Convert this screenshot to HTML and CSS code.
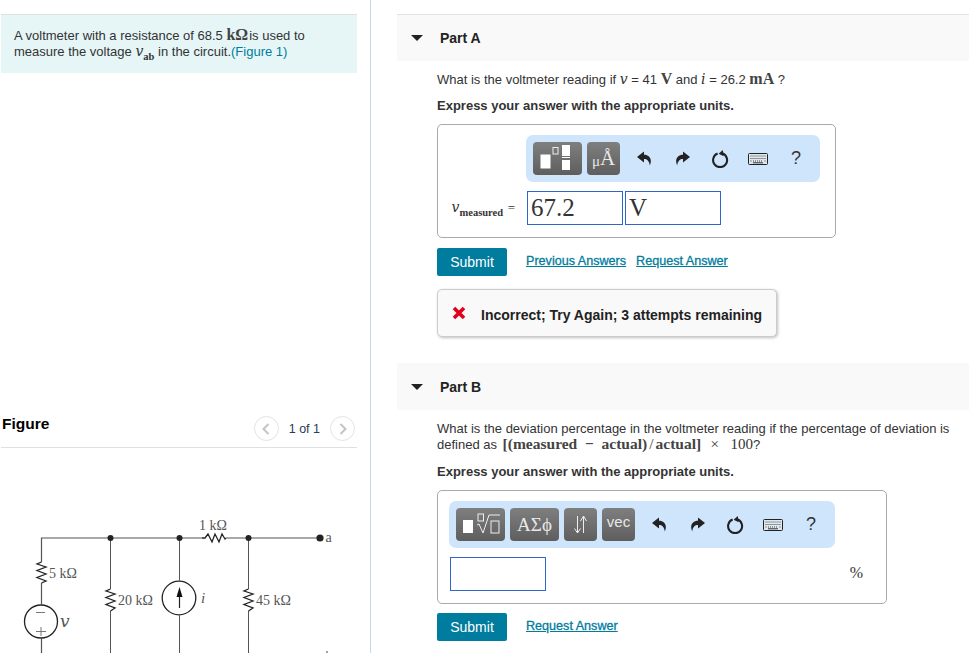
FILE: index.html
```html
<!DOCTYPE html>
<html lang="en">
<head>
  <meta charset="UTF-8">
  <title>Voltmeter problem</title>
  <link rel="stylesheet" href="styles.css">
</head>
<body>
  <svg class="defs" width="0" height="0">
    <defs>
      <symbol id="undo" viewBox="0 0 15 15"><path d="M7 0.5 L0 6 L7 11.5 V8 C10 8 12.3 9.8 12.8 14.5 C15.6 8.5 12.5 3.8 7 3.8 Z"/></symbol>
      <symbol id="redo" viewBox="0 0 15 15"><path d="M8 0.5 L15 6 L8 11.5 V8 C5 8 2.7 9.8 2.2 14.5 C-0.6 8.5 2.5 3.8 8 3.8 Z"/></symbol>
      <symbol id="reset" viewBox="0 0 18 18"><path d="M6.6 3.6 A7 7 0 1 0 11.6 3.6" fill="none" stroke="#222" stroke-width="2.1"/><path d="M11.8 0 L7.6 3.8 L12.6 6.2 Z" fill="#222"/></symbol>
      <symbol id="keys" viewBox="0 0 20 12"><rect x="0.5" y="0.5" width="19" height="11" rx="1" fill="#dfe7ef" stroke="#222"/><path d="M2.5 3h15M2.5 5.5h15M2.5 8h1M5 8h10M16.5 8h1" stroke="#444" stroke-width="1.2" stroke-dasharray="1 1" fill="none"/><path d="M5 9.8h10" stroke="#333"/></symbol>
    </defs>
  </svg>

  <div class="page">
    <div class="left">
      <div class="intro">
        A voltmeter with a resistance of 68.5 <span class="math-b">kΩ</span><span class="tight">is used to</span><br>
        measure the voltage <span class="math-i">v</span><sub class="math-sub">ab</sub> in the circuit.<a class="fig-link">(Figure 1)</a>
      </div>

      <div class="fig-head">
        <span class="fig-title">Figure</span>
        <div class="pager">
          <span class="pager-btn"><svg width="8" height="12" viewBox="0 0 8 12"><path d="M6.5 1 L1.5 6 L6.5 11" fill="none" stroke="#c4c4c4" stroke-width="2"/></svg></span>
          <span class="pager-text">1 of 1</span>
          <span class="pager-btn"><svg width="8" height="12" viewBox="0 0 8 12"><path d="M1.5 1 L6.5 6 L1.5 11" fill="none" stroke="#c4c4c4" stroke-width="2"/></svg></span>
        </div>
      </div>

      <svg class="circuit" width="356" height="206" viewBox="1 447 356 206">
        <g fill="none" stroke="#555" stroke-width="1">
          <path d="M41.5 653 V637.5 M41.5 603.5 V582 M41.5 561 V537 H202 M226 537 H320" stroke-width="1.2"/>
          <path d="M110.5 537 V588 M110.5 610 V653 M179.5 537 V579.5 M179.5 614.5 V653 M248.5 537 V588 M248.5 610 V653"/>
        </g>
        <g fill="none" stroke="#222" stroke-width="1.3">
          <path d="M41.5 561 L37 563 L46 566 L37 569.5 L46 573 L37 576.5 L46 580 L41.5 582"/>
          <path d="M110.5 588 L106 590 L115 593 L106 596.5 L115 600 L106 603.5 L115 607 L110.5 610"/>
          <path d="M248.5 588 L244 590 L253 593 L244 596.5 L253 600 L244 603.5 L253 607 L248.5 610"/>
          <path d="M202 537 L205 537 L208 533 L212 541 L215 533 L219 541 L222 533 L225 538 L226 537"/>
          <circle cx="41" cy="620.5" r="16.5"/>
          <circle cx="179" cy="597" r="16.8"/>
        </g>
        <path d="M179.5 607 V590" stroke="#222" stroke-width="1.2"/>
        <path d="M179.5 586 L176.5 596 H182.5 Z" fill="#111"/>
        <path d="M36 611.5 H45 M36 630.5 H46 M41 626 V635" stroke="#777" stroke-width="1"/>
        <g fill="#222">
          <circle cx="110.5" cy="537" r="3"/>
          <circle cx="179.5" cy="537" r="3"/>
          <circle cx="248.5" cy="537" r="3"/>
          <circle cx="320" cy="537" r="3.6"/>
        </g>
        <path d="M327 650 V653" stroke="#444"/>
        <g class="circuit-label">
          <text x="199" y="529">1 kΩ</text>
          <text x="325.5" y="541">a</text>
          <text x="49" y="577">5 kΩ</text>
          <text x="118" y="604">20 kΩ</text>
          <text x="256" y="604">45 kΩ</text>
          <text class="circuit-var" x="201" y="602">i</text>
          <text class="circuit-v" x="60" y="626">v</text>
        </g>
      </svg>
    </div>

    <div class="right">
      <section class="part part-a">
        <div class="part-head"><span class="caret"></span><span class="part-title">Part A</span></div>
        <div class="part-body">
          <p class="question">What is the voltmeter reading if <span class="math-i">v</span> = 41 <span class="math-b">V</span> and <span class="math-i">i</span> = 26.2 <span class="math-b">mA</span> ?</p>
          <p class="express">Express your answer with the appropriate units.</p>

          <div class="answer answer-a">
            <div class="toolbar toolbar-a">
              <span class="tool tool-wide">
                <svg width="49" height="33" viewBox="0 0 49 33">
                  <rect x="7.5" y="12.5" width="10" height="14" fill="#fff"/>
                  <rect x="20" y="5.5" width="5" height="6.5" fill="none" stroke="#eee"/>
                  <rect x="29" y="3" width="8" height="11" fill="#fff"/>
                  <rect x="29" y="15" width="8" height="1" fill="#fff"/>
                  <rect x="29" y="18" width="8" height="10" fill="#fff"/>
                </svg>
              </span>
              <span class="tool tool-units"><span class="unit-mu">μ</span>Å</span>
              <span class="slot"><svg class="ic-arrow"><use href="#undo"/></svg></span>
              <span class="slot"><svg class="ic-arrow"><use href="#redo"/></svg></span>
              <span class="slot"><svg class="ic-reset"><use href="#reset"/></svg></span>
              <span class="slot"><svg class="ic-keys"><use href="#keys"/></svg></span>
              <span class="slot slot-help">?</span>
            </div>
            <div class="answer-row">
              <span class="var-label"><span class="math-i">v</span><sub class="math-sub">measured</sub> <span class="eq">=</span></span>
              <div class="field">67.2</div>
              <div class="field">V</div>
            </div>
          </div>

          <div class="actions">
            <span class="submit">Submit</span>
            <a class="link">Previous Answers</a>
            <a class="link">Request Answer</a>
          </div>

          <div class="feedback">
            <svg width="14" height="14" viewBox="0 0 14 14"><path d="M2 2 L12 12 M12 2 L2 12" stroke="#e2001a" stroke-width="3.6"/></svg>
            <span class="feedback-text">Incorrect; Try Again; 3 attempts remaining</span>
          </div>
        </div>
      </section>

      <section class="part part-b">
        <div class="part-head"><span class="caret"></span><span class="part-title">Part B</span></div>
        <div class="part-body">
          <p class="question">What is the deviation percentage in the voltmeter reading if the percentage of deviation is<br>
          defined as <span class="math-formula">[(measured &nbsp;−&nbsp; actual)<span class="slash">/</span>actual]</span> <span class="math-r">&nbsp;×&nbsp; 100</span>?</p>
          <p class="express">Express your answer with the appropriate units.</p>

          <div class="answer answer-b">
            <div class="toolbar toolbar-b">
              <span class="tool tool-wide">
                <svg width="49" height="33" viewBox="0 0 49 33">
                  <rect x="7" y="12" width="10" height="13" fill="#fff"/>
                  <rect x="22" y="6" width="5.5" height="7" fill="none" stroke="#eee"/>
                  <path d="M21 17 L23 16 L27 25 L33 7 H44" fill="none" stroke="#eee"/>
                  <rect x="35" y="13" width="8" height="12" fill="none" stroke="#eee"/>
                </svg>
              </span>
              <span class="tool tool-wide tool-greek">ΑΣϕ</span>
              <span class="tool">
                <svg width="33" height="33" viewBox="0 0 33 33"><path d="M13.5 8 V24 M10.5 20.5 L13.5 25 L16.5 20.5 M19.5 25 V9 M16.5 13 L19.5 8 L22.5 13" fill="none" stroke="#eee"/></svg>
              </span>
              <span class="tool tool-vec">vec</span>
              <span class="slot"><svg class="ic-arrow"><use href="#undo"/></svg></span>
              <span class="slot"><svg class="ic-arrow"><use href="#redo"/></svg></span>
              <span class="slot"><svg class="ic-reset"><use href="#reset"/></svg></span>
              <span class="slot"><svg class="ic-keys"><use href="#keys"/></svg></span>
              <span class="slot slot-help">?</span>
            </div>
            <div class="answer-row answer-row-b">
              <div class="field"></div>
              <span class="percent">%</span>
            </div>
          </div>

          <div class="actions">
            <span class="submit">Submit</span>
            <a class="link">Request Answer</a>
          </div>
        </div>
      </section>
    </div>
  </div>
</body>
</html>
```

FILE: styles.css
```css
html, body {
  margin: 0;
  height: 653px;
  overflow: hidden;
  background: #fff;
}

body {
  font-family: "Liberation Sans", Arial, sans-serif;
  font-size: 13px;
  color: #333;
}

.defs {
  display: block;
  height: 0;
}

.page {
  display: flex;
  height: 653px;
}

/* left column */
.left {
  width: 356px;
  padding: 14px 13px 0 1px;
  border-right: 1px solid #c8d6e2;
  flex-shrink: 0;
}

.intro {
  background: #e6f6f7;
  border-top: 1px solid #e0e0e0;
  padding: 13px 13px 13px;
  line-height: 16px;
  height: 32px;
}

.tight {
  margin-left: 1px;
}

.fig-link {
  color: #007c9e;
}

.fig-head {
  margin-top: 337px;
  height: 37px;
  border-bottom: 1px solid #e0e0e0;
  display: flex;
  justify-content: space-between;
  align-items: flex-start;
}

.fig-title {
  font-size: 15.5px;
  font-weight: bold;
  color: #000;
  margin: 5px 0 0 1px;
  line-height: 18px;
}

.pager {
  display: flex;
  align-items: center;
  margin: 6px 2px 0 0;
}

.pager-btn {
  width: 23px;
  height: 23px;
  border: 1px solid #e3e3e3;
  border-radius: 50%;
  display: flex;
  align-items: center;
  justify-content: center;
}

.pager-text {
  margin: 0 10px 0 10px;
  font-size: 12.5px;
  color: #2b3a55;
}

.circuit {
  display: block;
}

.circuit-label text {
  font-family: "Liberation Serif", serif;
  font-size: 14px;
  fill: #555;
}

.circuit-label .circuit-var {
  font-style: italic;
  font-size: 15px;
}

.circuit-label .circuit-v {
  font-family: "DejaVu Serif", serif;
  font-style: italic;
  font-size: 17px;
}

/* math text */
.math-b {
  font-family: "Liberation Serif", serif;
  font-size: 16px;
  font-weight: bold;
  line-height: 0;
  color: #444;
}

.math-formula {
  font-family: "Liberation Serif", serif;
  font-size: 15.5px;
  font-weight: bold;
  line-height: 0;
  margin-left: 2px;
  color: #444;
}

.slash {
  font-weight: normal;
  margin: 0 2px;
}

.math-r {
  font-family: "Liberation Serif", serif;
  font-size: 15px;
  word-spacing: 2px;
  line-height: 0;
}

.math-i {
  font-family: "DejaVu Serif", serif;
  font-size: 14px;
  font-style: italic;
  line-height: 0;
}

.math-sub {
  font-family: "Liberation Serif", serif;
  font-size: 10.5px;
  font-weight: bold;
  line-height: 0;
}

/* right column */
.right {
  flex: 1;
  margin-left: 26px;
  padding-top: 14px;
  min-width: 0;
}

.part-a {
  height: 349px;
}

.part-head {
  height: 46px;
  background: #f9f9f9;
  display: flex;
  align-items: center;
  padding-left: 14px;
}

.part-a .part-head {
  border-top: 1px solid #e2e2e2;
}

.part-b .part-head {
  height: 47px;
}

.caret {
  width: 0;
  height: 0;
  border-left: 6px solid transparent;
  border-right: 6px solid transparent;
  border-top: 6px solid #222;
}

.part-title {
  margin-left: 17px;
  font-size: 14px;
  font-weight: bold;
  color: #222;
}

.part-body {
  padding-left: 40px;
}

p {
  margin: 0;
}

.question {
  line-height: 16px;
  padding-top: 11px;
}

.express {
  font-weight: bold;
  line-height: 16px;
  margin-top: 11px;
}

.part-a .express {
  margin-top: 10px;
}

.answer {
  border: 1px solid #aaa;
  border-radius: 5px;
  box-sizing: border-box;
  height: 114px;
  margin-top: 10px;
  padding-top: 10px;
}

.answer-a {
  width: 399px;
}

.answer-b {
  width: 450px;
}

.toolbar {
  height: 47px;
  box-sizing: border-box;
  background: #cfe5fc;
  border-radius: 7px;
  display: flex;
  align-items: center;
  padding-left: 7px;
  gap: 5px;
}

.toolbar-a {
  width: 294px;
  margin-left: 88px;
}

.toolbar-b {
  width: 386px;
  margin-left: 11px;
}

.tool {
  width: 33px;
  height: 33px;
  border-radius: 4px;
  background: linear-gradient(#7f7f7f, #5e5e5e);
  display: flex;
  align-items: center;
  justify-content: center;
  color: #e8e8e8;
  flex-shrink: 0;
}

.tool-wide {
  width: 49px;
}

.tool-units {
  font-family: "Liberation Serif", serif;
  font-size: 21px;
}

.unit-mu {
  font-size: 15px;
  margin-top: 6px;
}

.tool-greek {
  font-family: "Liberation Serif", serif;
  font-size: 19px;
}

.tool-vec {
  font-size: 15px;
  align-items: flex-start;
  padding-top: 6px;
  height: 27px;
  line-height: 16px;
}

.slot {
  width: 38px;
  margin-left: -5px;
  display: flex;
  align-items: center;
  justify-content: center;
  flex-shrink: 0;
  fill: #222;
}

.tool + .slot {
  margin-left: 0;
}

.slot-help {
  font-size: 18px;
  color: #333;
}

.ic-arrow {
  width: 15px;
  height: 15px;
}

.ic-reset {
  width: 18px;
  height: 18px;
}

.ic-keys {
  width: 20px;
  height: 12px;
}

.answer-row {
  display: flex;
  align-items: center;
  margin-top: 9px;
  gap: 2px;
}

.answer-row-b {
  padding-left: 12px;
  justify-content: space-between;
  padding-right: 23px;
}

.var-label {
  width: 87px;
  text-align: right;
  box-sizing: border-box;
  padding-right: 10px;
  white-space: nowrap;
}

.eq {
  font-family: "Liberation Serif", serif;
  margin-left: 1px;
}

.field {
  width: 96px;
  height: 34px;
  box-sizing: border-box;
  border: 1px solid #2f66c9;
  font-family: "Liberation Serif", serif;
  color: #333;
  padding-left: 3px;
  line-height: 31px;
  font-size: 25px;
}

.percent {
  font-family: "Liberation Serif", serif;
  font-size: 16px;
  margin-top: -2px;
}

.actions {
  display: flex;
  align-items: center;
  margin-top: 10px;
}

.part-b .actions {
  margin-top: 9px;
}

.submit {
  width: 70px;
  height: 28px;
  background: #007c9e;
  border-radius: 2px;
  color: #fff;
  font-size: 14px;
  text-align: center;
  line-height: 29px;
}

.link {
  color: #007c9e;
  font-size: 12.6px;
  -webkit-text-stroke: 0.3px #007c9e;
  text-decoration: underline;
  margin-left: 10px;
  margin-top: -3px;
}

.submit + .link {
  margin-left: 19px;
}

.feedback {
  width: 340px;
  height: 48px;
  box-sizing: border-box;
  margin-top: 13px;
  background: #f9f9f9;
  border: 1px solid #ccc;
  border-radius: 5px;
  box-shadow: 1px 1px 3px rgba(0,0,0,0.25);
  display: flex;
  align-items: center;
  padding-left: 14px;
  gap: 15px;
  font-size: 14px;
  font-weight: bold;
  color: #222;
}

.feedback-text {
  padding-top: 3px;
}
```
